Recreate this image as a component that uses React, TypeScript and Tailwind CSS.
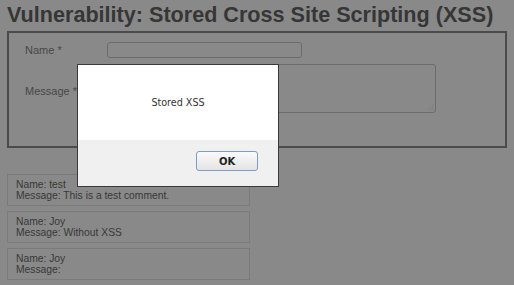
import React from "react";

export default function App() {
  const comments = [
    ["Name: test", "Message: This is a test comment."],
    ["Name: Joy", "Message: Without XSS"],
    ["Name: Joy", "Message:"],
  ];
  return (
    <div
      className="relative w-[514px] h-[285px] overflow-hidden bg-[#898989] px-[7px]"
      style={{ fontFamily: '"Liberation Sans", Arial, sans-serif' }}
    >
      <h1 className="h-[31px] pt-[2px] text-[21.6px] leading-[26px] font-bold text-[#363636] whitespace-nowrap">
        Vulnerability: Stored Cross Site Scripting (XSS)
      </h1>
      <div className="h-[117px] border-2 border-[#4b4b4b] pt-[9px]">
        <div className="flex items-center h-[16px]">
          <div className="w-[98px] pl-[16px] text-[11px] text-[#474747]">Name *</div>
          <div className="w-[195px] h-[16px] rounded-[3px] border border-[#6c6c6c]" />
        </div>
        <div className="flex mt-[6px]">
          <div className="w-[98px] pl-[16px] pt-[19px] text-[11px] text-[#474747]">Message *</div>
          <div className="relative w-[329px] h-[49px] rounded-[3px] border border-[#6c6c6c]">
            <svg className="absolute right-[1px] bottom-[1px]" width="7" height="7" viewBox="0 0 7 7">
              <g fill="#7a7a7a">
                <rect x="5" y="1" width="1" height="1" />
                <rect x="3" y="3" width="1" height="1" />
                <rect x="5" y="3" width="1" height="1" />
                <rect x="1" y="5" width="1" height="1" />
                <rect x="3" y="5" width="1" height="1" />
                <rect x="5" y="5" width="1" height="1" />
              </g>
            </svg>
          </div>
        </div>
      </div>
      <div className="mt-[26px] w-[243px] flex flex-col gap-[5px]">
        {comments.map((c, i) => (
          <div
            key={i}
            className="h-[32px] border border-[#7b7b7b] pl-[8px] pt-[4px] text-[10.3px] leading-[11px] text-[#383838]"
          >
            <div>{c[0]}</div>
            <div>{c[1]}</div>
          </div>
        ))}
      </div>

      <div
        className="absolute left-[77px] top-[64px] w-[202px] h-[123px] bg-white border border-[#3a3a3a] flex flex-col"
        style={{ fontFamily: '"DejaVu Sans", Verdana, sans-serif' }}
      >
        <div className="h-[75px] flex items-center justify-center pt-[2px] text-[9.6px] text-[#333]">
          Stored XSS
        </div>
        <div className="flex-1 bg-[#f0f0f0] flex justify-end items-start pt-[11px] pr-[20px]">
          <div className="w-[62px] h-[20px] rounded-[3px] border border-[#7f9cc7] bg-gradient-to-b from-[#fafafa] to-[#e4e4e4] flex items-center justify-center text-[10px] font-bold text-[#222]">
            OK
          </div>
        </div>
      </div>
    </div>
  );
}
